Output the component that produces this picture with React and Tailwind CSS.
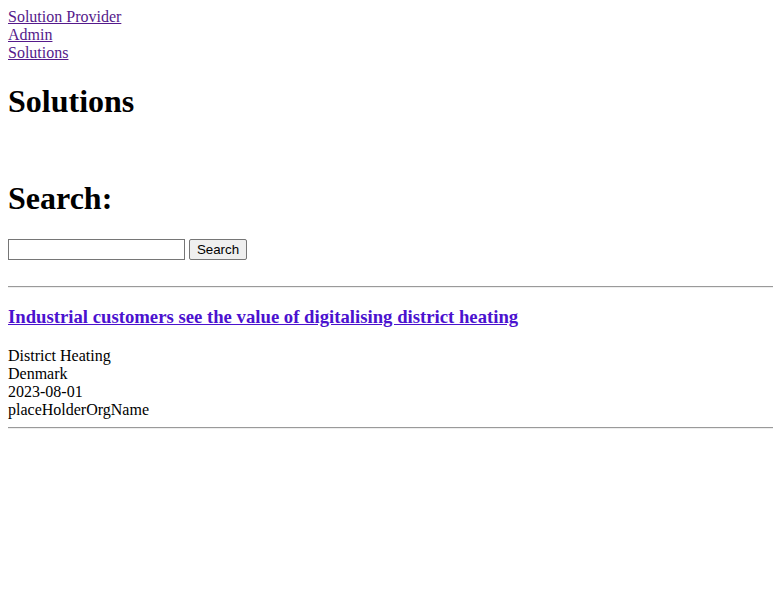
export default function App() {
    // data of the single listed solution
    const item = {
        title: "Industrial customers see the value of digitalising district heating",
        category: "District Heating",
        country: "Denmark",
        date: "2023-08-01",
        org: "placeHolderOrgName",
    };

    return (
        <div className="min-h-[609px] bg-white pl-2 pt-2 text-[16px] leading-[18px] text-black" style={{ fontFamily: '"Liberation Serif", "Times New Roman", serif' }}>
            {/* nav links */}
            <div className="flex flex-col items-start">
                <a href="#" className="text-[#551a8b] underline">Solution Provider</a>
                <a href="#" className="text-[#551a8b] underline">Admin</a>
                <a href="#" className="text-[#551a8b] underline">Solutions</a>
            </div>

            <h1 className="mt-[21px] text-[32px] leading-[37px] font-bold">Solutions</h1>
            <div className="mt-[21px] h-[18px]"></div>

            <h1 className="mt-[21px] text-[32px] leading-[37px] font-bold">Search:</h1>
            <form className="mt-[22px] flex items-center gap-[4px]" onSubmit={(e) => e.preventDefault()}>
                <input type="text" className="h-[21px] w-[177px] border border-[#767676] bg-white px-[2px] text-[13px] outline-none" />
                <button type="submit" className="h-[21px] w-[58px] rounded-[2px] border border-[#767676] bg-[#efefef] text-[13.33px] leading-[15px] text-black" style={{ fontFamily: '"Liberation Sans", Arial, sans-serif' }}>Search</button>
            </form>

            <hr className="mt-[26px] border-0 border-t border-t-[#9a9a9a] h-[2px] border-b border-b-[#eeeeee]" />

            <h3 className="mt-[18px] text-[18.72px] leading-[22px] font-bold">
                <a href="#" className="text-[#4b12cf] underline">{item.title}</a>
            </h3>
            <div className="mt-[19px] flex flex-col">
                <span>{item.category}</span>
                <span>{item.country}</span>
                <span>{item.date}</span>
                <span>{item.org}</span>
            </div>
            <hr className="mt-[8px] border-0 border-t border-t-[#9a9a9a] h-[2px] border-b border-b-[#eeeeee]" />
        </div>
    );
}
